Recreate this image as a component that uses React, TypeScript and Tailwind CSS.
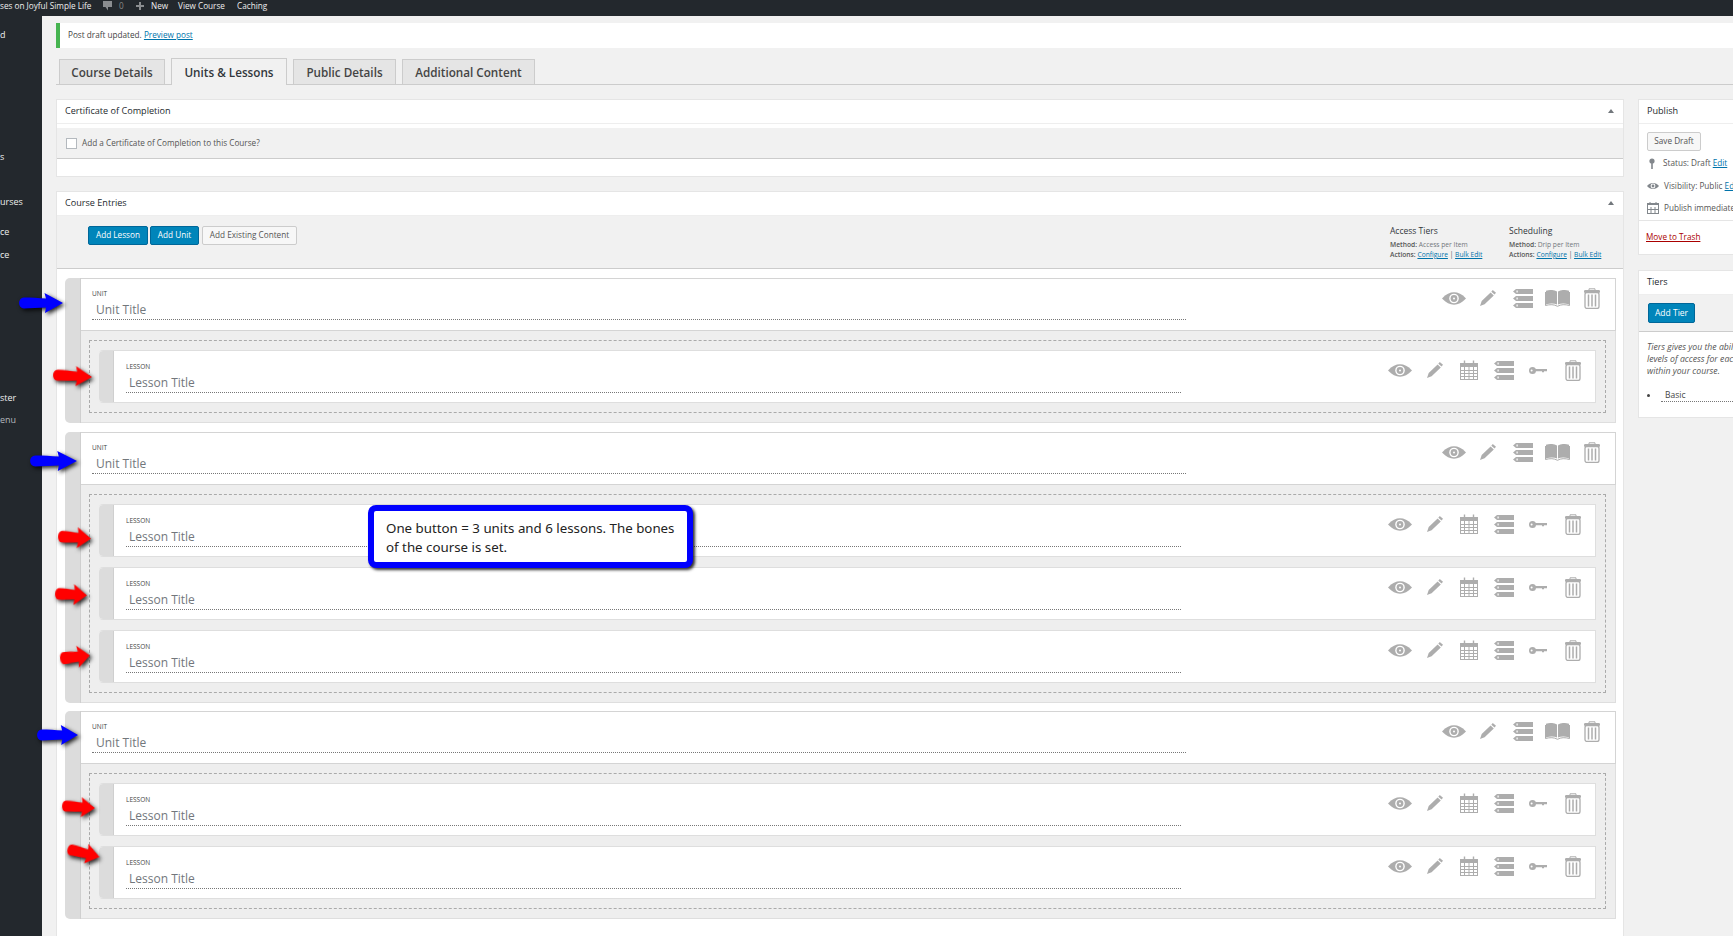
import React from "react";

const gray = "#adadad";

function EyeIcon() {
  return (
    <svg width="24" height="13" viewBox="0 0 24 13">
      <path d="M0 6.5C4 2 8 .3 12 .3S20 2 24 6.5C20 11 16 12.7 12 12.7S4 11 0 6.5Z" fill={gray} />
      <circle cx="12" cy="6.5" r="4.8" fill="#fff" />
      <circle cx="12" cy="6.5" r="3.4" fill={gray} />
      <circle cx="12" cy="6.5" r="1" fill="#fff" />
    </svg>
  );
}

function PencilIcon() {
  return (
    <svg width="16" height="16" viewBox="0 0 16 16">
      <path d="M12.8 0 16 2.8 14.6 4.6 11.3 1.7Z M10.6 2.5 13.8 5.4 4.6 14.2 0 16 1.7 11Z" fill={gray} />
    </svg>
  );
}

function ListIcon() {
  return (
    <svg width="20" height="19" viewBox="0 0 20 19">
      {[0, 7, 14].map((y) => (
        <g key={y}>
          <path d={`M0 ${y + 2.5}L3 ${y}H20V${y + 5}H3Z`} fill={gray} />
          <rect x="3.5" y={y + 1.5} width="1.2" height="2" fill="#fff" />
        </g>
      ))}
    </svg>
  );
}

function BookIcon() {
  return (
    <svg width="25" height="17" viewBox="0 0 25 17">
      <path d="M1 .8C5 -.4 9 -.4 12 1.5V14.5C9 13 5 13 1 14.5Z M13 1.5C16 -.4 20 -.4 24 .8V14.5C20 13 16 13 13 14.5Z" fill={gray} />
      <path d="M.5 2V15.5C5 14.3 9 14.3 12.5 16.3C16 14.3 20 14.3 24.5 15.5V2" fill="none" stroke={gray} />
    </svg>
  );
}

function TrashIcon() {
  return (
    <svg width="16" height="21" viewBox="0 0 16 21">
      <path d="M5 2.5V.8H11V2.5" fill="none" stroke={gray} />
      <rect x="0" y="2" width="16" height="3" rx="1.2" fill={gray} />
      <rect x="1" y="4.5" width="14" height="16" rx="2" fill="none" stroke={gray} strokeWidth="1.3" />
      <path d="M4.5 6.5V18.5M8 6.5V18.5M11.5 6.5V18.5" stroke={gray} strokeWidth="1.5" />
    </svg>
  );
}

function CalendarIcon() {
  return (
    <svg width="18" height="20" viewBox="0 0 18 20">
      <rect x=".5" y="3.5" width="17" height="16" fill="none" stroke={gray} />
      <rect x="0" y="3" width="18" height="4" fill={gray} />
      <path d="M4.5 .5V5M13.5 .5V5" stroke={gray} strokeWidth="1.4" />
      <path d="M.5 10.5H17.5M.5 13.5H17.5M.5 16.5H17.5M4.5 7V19M9 7V19M13.5 7V19" stroke={gray} strokeWidth="1" />
    </svg>
  );
}

function KeyIcon() {
  return (
    <svg width="18" height="7" viewBox="0 0 18 7">
      <circle cx="3.5" cy="3.5" r="3.5" fill={gray} />
      <circle cx="2.6" cy="3.5" r="1" fill="#fff" />
      <path d="M6 2H18V4.3H15V5.3H13V4.3H6Z" fill={gray} />
    </svg>
  );
}

function IconCell({ children }: { children: React.ReactNode }) {
  return <div className="flex h-[22px] w-[34.5px] items-center justify-center">{children}</div>;
}

function UnitRow() {
  return (
    <div className="flex h-[53px] border-t border-r border-b border-[#d4d4d4] bg-white">
      <div className="ml-[11px] w-[1094px] pt-[10px]">
        <div className="h-[9px] text-[6.5px] leading-[9px] text-[#444]">UNIT</div>
        <div className="h-[22px] border-b border-dotted border-[#777] pl-[4px] text-[12px] leading-[24px] text-[#72777c]">
          Unit Title
        </div>
      </div>
      <div className="ml-auto flex pt-[8px] pr-[6px]">
        <IconCell><EyeIcon /></IconCell>
        <IconCell><PencilIcon /></IconCell>
        <IconCell><ListIcon /></IconCell>
        <IconCell><BookIcon /></IconCell>
        <IconCell><TrashIcon /></IconCell>
      </div>
    </div>
  );
}

function LessonRow() {
  return (
    <div className="flex h-[53px] rounded-l-[4px] border-y border-r border-[#dedede] bg-white">
      <div className="w-[15px] rounded-l-[4px] border-r border-[#cfcfcf] bg-[#dcdcdc]" />
      <div className="ml-[12px] w-[1055px] pt-[11px]">
        <div className="h-[9px] text-[6.5px] leading-[9px] text-[#444]">LESSON</div>
        <div className="h-[22px] border-b border-dotted border-[#777] pl-[3px] text-[12px] leading-[24px] text-[#72777c]">
          Lesson Title
        </div>
      </div>
      <div className="ml-auto flex pt-[8px] pr-[5px]">
        <IconCell><EyeIcon /></IconCell>
        <IconCell><PencilIcon /></IconCell>
        <IconCell><CalendarIcon /></IconCell>
        <IconCell><ListIcon /></IconCell>
        <IconCell><KeyIcon /></IconCell>
        <IconCell><TrashIcon /></IconCell>
      </div>
    </div>
  );
}

function Unit({ lessons, className }: { lessons: number; className?: string }) {
  return (
    <div className={`flex rounded-[4px] ${className ?? ""}`}>
      <div className="w-[16px] shrink-0 rounded-l-[5px] border-r border-[#cfcfcf] bg-[#dcdcdc]" />
      <div className="flex-1">
        <UnitRow />
        <div className="border-r border-b border-[#dedede] bg-[#eeeeee] py-[9px] pr-[9px] pl-[8px]">
          <div className="flex flex-col gap-[10px] border border-dashed border-[#aaa] p-[9px]">
            {Array.from({ length: lessons }).map((_, i) => (
              <LessonRow key={i} />
            ))}
          </div>
        </div>
      </div>
    </div>
  );
}

function Arrow({ color, className }: { color: string; className: string }) {
  return (
    <svg
      viewBox="0 0 44 20"
      preserveAspectRatio="none"
      className={`absolute drop-shadow-[2px_2px_2px_rgba(0,0,0,0.85)] ${className}`}
    >
      <path d="M5 4.5C12 4.5 20 5 27 5.5L25.5 0 44 10 26 20 27 14.5C20 14.5 12 15.5 5 15.5C-1.500 15-1.500 5 5 4.500Z" fill={color} />
    </svg>
  );
}

function BoxHeader({ title, arrow }: { title: string; arrow?: boolean }) {
  return (
    <div className="flex h-[24px] items-center justify-between border-b border-[#eeeeee] bg-white pr-[9px] pb-[2px] pl-[8px] text-[9.1px] text-[#23282d]">
      <span>{title}</span>
      {arrow && <span className="h-0 w-0 border-x-[3px] border-b-[4px] border-x-transparent border-b-[#72777c]" />}
    </div>
  );
}

function Tab({ label, active }: { label: string; active?: boolean }) {
  return (
    <div
      className={
        active
          ? "z-10 -mb-px flex h-[27px] w-[116px] items-center justify-center border border-b-0 border-[#ccc] bg-[#f1f1f1] pt-[1px] text-[#32373c]"
          : "flex h-[25px] items-center justify-center border border-b-0 border-[#ccc] bg-[#e5e5e5] pt-[1px] text-[#444]"
      }
    >
      {label}
    </div>
  );
}

function Method({ title, method }: { title: string; method: string }) {
  return (
    <div className="text-[#555]">
      <div className="mb-[3px] text-[8.5px] leading-[12px] text-[#32373c]">{title}</div>
      <div className="text-[6.7px] leading-[10px]">
        <b className="font-semibold">Method:</b> <span className="text-[#72777c]">{method}</span>
      </div>
      <div className="text-[6.7px] leading-[10px]">
        <b className="font-semibold">Actions:</b> <a className="text-[#0073aa] underline">Configure</a> | <a className="text-[#0073aa] underline">Bulk Edit</a>
      </div>
    </div>
  );
}

export default function App() {
  return (
    <div className="relative flex h-[936px] w-full overflow-hidden bg-[#f1f1f1] font-['Open_Sans',sans-serif] text-[#444]">
      {/* admin bar */}
      <div className="absolute top-0 left-0 z-20 flex h-[16px] w-full items-start bg-[#23282d] pt-[1px] text-[8.2px] leading-[10px] whitespace-nowrap text-[#eee]">
        <span className="w-[103px]">ses on Joyful Simple Life</span>
        <svg width="9" height="10" viewBox="0 0 9 10" className="mr-[7px]">
          <path d="M0 0H9V6H5V9.5L2.5 6H0Z" fill="#8a8d90" />
        </svg>
        <span className="w-[17px] text-[#888]">0</span>
        <svg width="8" height="8" viewBox="0 0 8 8" className="mt-[1px] mr-[7px]">
          <path d="M3 0H5V3H8V5H5V8H3V5H0V3H3Z" fill="#8a8d90" />
        </svg>
        <span className="w-[27px]">New</span>
        <span className="w-[59px]">View Course</span>
        <span>Caching</span>
      </div>

      {/* sidebar */}
      <div className="w-[42px] shrink-0 bg-[#23282d] pt-[29px] text-[9px] leading-[12px] text-[#eee]">
        <div>d</div>
        <div className="mt-[110px]">s</div>
        <div className="mt-[33px]">urses</div>
        <div className="mt-[18px]">ce</div>
        <div className="mt-[11px]">ce</div>
        <div className="mt-[131px]">ster</div>
        <div className="mt-[10px] text-[#b4b9be]">enu</div>
      </div>

      <div className="min-w-0 flex-1 pt-[23px] pl-[14px]">
        <div className="flex h-[25px] items-center border-l-[4px] border-[#46b450] bg-white pl-[8px] text-[8.2px] text-[#444]">
          Post draft updated.&nbsp;<a className="text-[#0073aa] underline">Preview post</a>
        </div>

        <div className="mt-[12px] flex h-[25px] items-end gap-[6px] border-b border-[#ccc] pl-[3px] text-[11.7px] font-semibold">
          <div className="w-[106px]"><Tab label="Course Details" /></div>
          <Tab label="Units & Lessons" active />
          <div className="w-[103px]"><Tab label="Public Details" /></div>
          <div className="w-[133px]"><Tab label="Additional Content" /></div>
        </div>

        <div className="mt-[14px] flex gap-[14px]">
          <div className="w-[1568px] shrink-0">
            {/* certificate */}
            <div className="h-[78px] border border-[#e5e5e5] bg-white">
              <BoxHeader title="Certificate of Completion" arrow />
              <div className="mt-[4px] flex h-[31px] items-center gap-[5px] border-b border-[#ccc] bg-[#f1f1f1] pl-[9px] text-[8.2px] text-[#555]">
                <span className="h-[11px] w-[11px] border border-[#b4b9be] bg-white" />
                Add a Certificate of Completion to this Course?
              </div>
            </div>

            {/* course entries */}
            <div className="mt-[14px] h-[760px] border border-[#e5e5e5] bg-white">
              <BoxHeader title="Course Entries" arrow />
              <div className="flex h-[53px] justify-between border-b border-[#ccc] bg-[#f1f1f1] pl-[31px]">
                <div className="mt-[10px] flex h-[19px] gap-[2px] text-[8.2px]">
                  <span className="flex h-[19px] w-[60px] items-center justify-center rounded-[2px] border border-[#006799] bg-[#0085ba] text-white">Add Lesson</span>
                  <span className="flex h-[19px] w-[49px] items-center justify-center rounded-[2px] border border-[#006799] bg-[#0085ba] text-white">Add Unit</span>
                  <span className="ml-[1px] flex h-[19px] w-[95px] items-center justify-center rounded-[2px] border border-[#ccc] bg-[#f7f7f7] text-[#555]">Add Existing Content</span>
                </div>
                <div className="flex pt-[9px]">
                  <div className="w-[119px]"><Method title="Access Tiers" method="Access per Item" /></div>
                  <div className="w-[114px]"><Method title="Scheduling" method="Drip per Item" /></div>
                </div>
              </div>
              <div className="flex flex-col pt-[9px] pr-[7px] pl-[8px]">
                <Unit lessons={1} />
                <Unit lessons={3} className="mt-[9px]" />
                <Unit lessons={2} className="mt-[8px]" />
              </div>
            </div>
          </div>

          {/* side column */}
          <div className="w-[280px] shrink-0">
            <div className="h-[156px] border border-[#e5e5e5] bg-white">
              <BoxHeader title="Publish" />
              <div className="pl-[8px] text-[8.2px] text-[#555]">
                <span className="mt-[8px] flex h-[19px] w-[54px] items-center justify-center rounded-[2px] border border-[#ccc] bg-[#f7f7f7]">Save Draft</span>
                <div className="mt-[2px] flex h-[20px] items-center gap-[8px]">
                  <svg width="6" height="11" viewBox="0 0 6 11" className="ml-[2px]"><circle cx="3" cy="3" r="2.6" fill="#82878c" /><rect x="2.2" y="5" width="1.6" height="6" fill="#82878c" /></svg>
                  <span>Status: Draft <a className="text-[#0073aa] underline">Edit</a></span>
                </div>
                <div className="mt-[3px] flex h-[20px] items-center gap-[5px]">
                  <svg width="12" height="8" viewBox="0 0 12 8"><path d="M0 4C3 0 9 0 12 4C9 8 3 8 0 4Z" fill="#82878c" /><circle cx="6" cy="4" r="2.4" fill="#fff" /><circle cx="6" cy="4" r="1.4" fill="#82878c" /></svg>
                  <span>Visibility: Public <a className="text-[#0073aa] underline">Edit</a></span>
                </div>
                <div className="mt-[2px] flex h-[20px] items-center gap-[5px]">
                  <svg width="12" height="12" viewBox="0 0 12 12"><rect x=".5" y="1.500" width="11" height="10" fill="none" stroke="#82878c" /><path d="M0 2.500H12M4 5V11M8 5V11M0 7.500H12M3 0V2M9 0V2" stroke="#82878c" /></svg>
                  <span>Publish immediately</span>
                </div>
              </div>
              <div className="mt-[2px] border-t border-[#e5e5e5] pt-[10px] pl-[7px] text-[8.2px] leading-[12px]">
                <a className="text-[#a00] underline">Move to Trash</a>
              </div>
            </div>

            <div className="mt-[15px] h-[148px] border border-[#e5e5e5] bg-white">
              <BoxHeader title="Tiers" />
              <div className="flex h-[37px] items-center border-b border-[#ccc] bg-[#f1f1f1] pl-[9px]">
                <span className="flex h-[20px] w-[47px] items-center justify-center rounded-[2px] border border-[#006799] bg-[#0085ba] text-[8.5px] text-white">Add Tier</span>
              </div>
              <div className="pt-[9px] pl-[8px] text-[8.7px] leading-[12px] text-[#555] italic">
                <div>Tiers gives you the ability to create</div>
                <div>levels of access for each item</div>
                <div>within your course.</div>
              </div>
              <div className="mt-[11px] flex items-center pl-[8px] text-[8.5px] text-[#444]">
                <span className="mr-[11px] h-[3px] w-[3px] rounded-full bg-[#444]" />
                <span className="w-[200px] border-b border-dotted border-[#777] pl-[4px] leading-[13px]">Basic</span>
              </div>
            </div>
          </div>
        </div>
      </div>

      {/* annotation overlays */}
      <div className="absolute top-[505px] left-[368px] flex h-[63px] w-[325px] items-center rounded-[8px] border-[6px] border-[#0000ff] bg-white pt-[3px] pl-[12px] font-['Noto_Sans',sans-serif] text-[13.3px] leading-[19px] text-[#222] shadow-[2px_2px_3px_rgba(0,0,0,0.8)]">
        <div>
          One button = 3 units and 6 lessons. The bones
          <br />
          of the course is set.
        </div>
      </div>
      <Arrow color="#0000ff" className="top-[293px] left-[19px] h-[20px] w-[44px]" />
      <Arrow color="#0000ff" className="top-[451px] left-[30px] h-[20px] w-[47px]" />
      <Arrow color="#0000ff" className="top-[725px] left-[37px] h-[20px] w-[41px]" />
      <Arrow color="#ff0000" className="top-[366px] left-[53px] h-[20px] w-[39px] rotate-[3deg]" />
      <Arrow color="#ff0000" className="top-[527px] left-[58px] h-[21px] w-[33px] rotate-[4deg]" />
      <Arrow color="#ff0000" className="top-[584px] left-[55px] h-[21px] w-[32px] rotate-[3deg]" />
      <Arrow color="#ff0000" className="top-[646px] left-[60px] h-[22px] w-[30px] -rotate-[6deg]" />
      <Arrow color="#ff0000" className="top-[797px] left-[62px] h-[20px] w-[33px] rotate-[4deg]" />
      <Arrow color="#ff0000" className="top-[843px] left-[67px] h-[20px] w-[33px] rotate-[14deg]" />
    </div>
  );
}
